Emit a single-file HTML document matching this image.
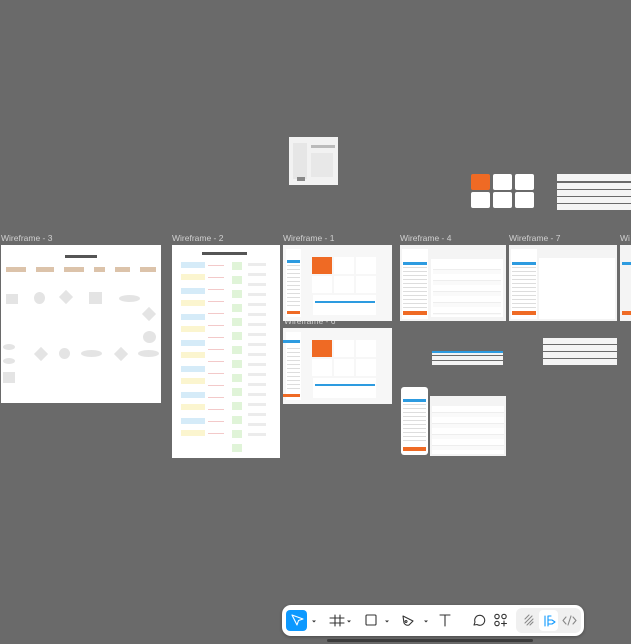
<!DOCTYPE html>
<html><head><meta charset="utf-8"><style>
*{margin:0;padding:0;box-sizing:border-box}
body{width:631px;height:644px;background:#6a6a6a;position:relative;overflow:hidden;font-family:"Liberation Sans",sans-serif}
.a{position:absolute}
.lbl{position:absolute;color:#d0d0d0;font-size:8.5px;white-space:nowrap}
.f{position:absolute;background:#fff;overflow:hidden}
.g{background:#e4e4e4}
.ln{position:absolute;height:1px;background:#ccc}
</style></head><body>

<!-- thumbnail -->
<div class="f" style="left:289px;top:137px;width:49px;height:48px;background:#f2f2f2">
 <div class="a" style="left:4px;top:6px;width:14px;height:36px;background:#e6e6e6"></div>
 <div class="a" style="left:22px;top:8px;width:24px;height:3px;background:#bbb"></div>
 <div class="a" style="left:22px;top:16px;width:22px;height:24px;background:#e8e8e8"></div>
 <div class="a" style="left:8px;top:40px;width:8px;height:4px;background:#888"></div>
</div>

<!-- orange tiles -->
<div class="a" style="left:471px;top:174px;width:19px;height:16px;background:#ef6a24;border-radius:2px"></div>
<div class="a" style="left:493px;top:174px;width:19px;height:16px;background:#fff;border-radius:2px"></div>
<div class="a" style="left:515px;top:174px;width:19px;height:16px;background:#fff;border-radius:2px"></div>
<div class="a" style="left:471px;top:192px;width:19px;height:16px;background:#fff;border-radius:2px"></div>
<div class="a" style="left:493px;top:192px;width:19px;height:16px;background:#fff;border-radius:2px"></div>
<div class="a" style="left:515px;top:192px;width:19px;height:16px;background:#fff;border-radius:2px"></div>
<!-- table rows top right -->
<div class="a" style="left:557px;top:174px;width:74px;height:7px;background:#f4f4f4"></div>
<div class="a" style="left:557px;top:183px;width:74px;height:6px;background:#f4f4f4"></div>
<div class="a" style="left:557px;top:190px;width:74px;height:6px;background:#f4f4f4"></div>
<div class="a" style="left:557px;top:197px;width:74px;height:6px;background:#f4f4f4"></div>
<div class="a" style="left:557px;top:204px;width:74px;height:6px;background:#f4f4f4"></div>

<!-- labels -->
<div class="lbl" style="left:1px;top:233px">Wireframe - 3</div>
<div class="lbl" style="left:172px;top:233px">Wireframe - 2</div>
<div class="lbl" style="left:283px;top:233px">Wireframe - 1</div>
<div class="lbl" style="left:400px;top:233px">Wireframe - 4</div>
<div class="lbl" style="left:509px;top:233px">Wireframe - 7</div>
<div class="lbl" style="left:620px;top:233px">Wi</div>
<div class="lbl" style="left:284px;top:316px">Wireframe - 6</div>

<!-- Wireframe 3 -->
<div class="f" style="left:1px;top:245px;width:160px;height:158px">
 <div class="a" style="left:64px;top:10px;width:32px;height:3px;background:#555"></div>
 <div class="a" style="left:5px;top:22px;width:20px;height:5px;background:#dcc3aa"></div>
 <div class="a" style="left:35px;top:22px;width:18px;height:5px;background:#dcc3aa"></div>
 <div class="a" style="left:63px;top:22px;width:20px;height:5px;background:#dcc3aa"></div>
 <div class="a" style="left:93px;top:22px;width:11px;height:5px;background:#dcc3aa"></div>
 <div class="a" style="left:114px;top:22px;width:15px;height:5px;background:#dcc3aa"></div>
 <div class="a" style="left:139px;top:22px;width:16px;height:5px;background:#dcc3aa"></div>
 <div class="a g" style="left:5px;top:49px;width:12px;height:10px"></div>
 <div class="a g" style="left:33px;top:47px;width:11px;height:12px;border-radius:50%"></div>
 <div class="a g" style="left:60px;top:47px;width:10px;height:10px;transform:rotate(45deg)"></div>
 <div class="a g" style="left:88px;top:47px;width:13px;height:12px"></div>
 <div class="a g" style="left:118px;top:50px;width:21px;height:7px;border-radius:50%"></div>
 <div class="a g" style="left:143px;top:64px;width:10px;height:10px;transform:rotate(45deg)"></div>
 <div class="a g" style="left:142px;top:86px;width:13px;height:12px;border-radius:50%"></div>
 <div class="a g" style="left:137px;top:105px;width:21px;height:7px;border-radius:50%"></div>
 <div class="a g" style="left:115px;top:104px;width:10px;height:10px;transform:rotate(45deg)"></div>
 <div class="a g" style="left:80px;top:105px;width:21px;height:7px;border-radius:50%"></div>
 <div class="a g" style="left:58px;top:103px;width:11px;height:11px;border-radius:50%"></div>
 <div class="a g" style="left:35px;top:104px;width:10px;height:10px;transform:rotate(45deg)"></div>
 <div class="a g" style="left:2px;top:99px;width:12px;height:6px;border-radius:50%"></div>
 <div class="a g" style="left:2px;top:113px;width:12px;height:6px;border-radius:50%"></div>
 <div class="a g" style="left:2px;top:127px;width:12px;height:11px"></div>
</div>

<!-- Wireframe 2 -->
<div class="f" style="left:172px;top:245px;width:108px;height:213px">
 <div class="a" style="left:30px;top:7px;width:45px;height:3px;background:#555"></div>
 <div class="a" style="left:9px;top:17px;width:24px;height:180px;background:repeating-linear-gradient(#d5ebf8 0 6px,#fff 6px 12px,#fbf5cf 12px 18px,#fff 18px 26px)"></div>
 <div class="a" style="left:60px;top:17px;width:10px;height:190px;background:repeating-linear-gradient(#e0f4d8 0 8px,#fff 8px 14px)"></div>
 <div class="a" style="left:76px;top:18px;width:18px;height:180px;background:repeating-linear-gradient(#ececec 0 3px,#fff 3px 10px)"></div>
 <div class="a" style="left:36px;top:20px;width:16px;height:180px;background:repeating-linear-gradient(#f3c9c9 0 1px,#fff 1px 12px)"></div>
</div>

<!-- dashboard frames -->
<div class="f" style="left:283px;top:245px;width:109px;height:76px;background:#f7f7f7">
 <div class="a" style="left:3px;top:4px;width:15px;height:68px;background:#fff"></div>
 <div class="a" style="left:4px;top:15px;width:13px;height:3px;background:#2d9be0"></div>
 <div class="a" style="left:4px;top:20px;width:13px;height:44px;background:repeating-linear-gradient(#ddd 0 1px,#fff 1px 4px)"></div>
 <div class="a" style="left:4px;top:66px;width:13px;height:3px;background:#ef6a24"></div>
 <div class="a" style="left:29px;top:12px;width:20px;height:17px;background:#ef6a24"></div>
 <div class="a" style="left:51px;top:12px;width:20px;height:17px;background:#fff"></div>
 <div class="a" style="left:73px;top:12px;width:20px;height:17px;background:#fff"></div>
 <div class="a" style="left:29px;top:31px;width:20px;height:17px;background:#fff"></div>
 <div class="a" style="left:51px;top:31px;width:20px;height:17px;background:#fff"></div>
 <div class="a" style="left:73px;top:31px;width:20px;height:17px;background:#fff"></div>
 <div class="a" style="left:30px;top:50px;width:63px;height:20px;background:#fff"></div>
 <div class="a" style="left:32px;top:56px;width:60px;height:2px;background:#2d9be0"></div>
</div>
<div class="f" style="left:283px;top:328px;width:109px;height:76px;background:#f7f7f7">
 <div class="a" style="left:3px;top:4px;width:15px;height:68px;background:#fff"></div>
 <div class="a" style="left:0px;top:12px;width:17px;height:3px;background:#2d9be0"></div>
 <div class="a" style="left:4px;top:20px;width:13px;height:44px;background:repeating-linear-gradient(#ddd 0 1px,#fff 1px 4px)"></div>
 <div class="a" style="left:0px;top:66px;width:17px;height:3px;background:#ef6a24"></div>
 <div class="a" style="left:29px;top:12px;width:20px;height:17px;background:#ef6a24"></div>
 <div class="a" style="left:51px;top:12px;width:20px;height:17px;background:#fff"></div>
 <div class="a" style="left:73px;top:12px;width:20px;height:17px;background:#fff"></div>
 <div class="a" style="left:29px;top:31px;width:20px;height:17px;background:#fff"></div>
 <div class="a" style="left:51px;top:31px;width:20px;height:17px;background:#fff"></div>
 <div class="a" style="left:73px;top:31px;width:20px;height:17px;background:#fff"></div>
 <div class="a" style="left:30px;top:50px;width:63px;height:20px;background:#fff"></div>
 <div class="a" style="left:32px;top:56px;width:60px;height:2px;background:#2d9be0"></div>
</div>

<!-- Wireframe 4 -->
<div class="f" style="left:400px;top:245px;width:106px;height:76px;background:#f4f4f4">
 <div class="a" style="left:2px;top:4px;width:26px;height:70px;background:#fff"></div>
 <div class="a" style="left:3px;top:17px;width:24px;height:3px;background:#2d9be0"></div>
 <div class="a" style="left:3px;top:22px;width:24px;height:42px;background:repeating-linear-gradient(#ddd 0 1px,#fff 1px 4px)"></div>
 <div class="a" style="left:3px;top:66px;width:24px;height:4px;background:#ef6a24"></div>
 <div class="a" style="left:31px;top:14px;width:72px;height:58px;background:#fff"></div>
 <div class="a" style="left:33px;top:18px;width:68px;height:52px;background:repeating-linear-gradient(#fff 0 6px,#eee 6px 7px,#fafafa 7px 11px)"></div>
</div>
<!-- Wireframe 7 -->
<div class="f" style="left:509px;top:245px;width:108px;height:76px;background:#f4f4f4">
 <div class="a" style="left:2px;top:4px;width:26px;height:70px;background:#fff"></div>
 <div class="a" style="left:3px;top:17px;width:24px;height:3px;background:#2d9be0"></div>
 <div class="a" style="left:3px;top:22px;width:24px;height:42px;background:repeating-linear-gradient(#ddd 0 1px,#fff 1px 4px)"></div>
 <div class="a" style="left:3px;top:66px;width:24px;height:4px;background:#ef6a24"></div>
 <div class="a" style="left:30px;top:13px;width:76px;height:61px;background:#fff"></div>
</div>
<div class="f" style="left:620px;top:245px;width:11px;height:76px;background:#f4f4f4">
 <div class="a" style="left:2px;top:17px;width:9px;height:3px;background:#2d9be0"></div>
 <div class="a" style="left:2px;top:66px;width:9px;height:4px;background:#ef6a24"></div>
</div>

<!-- small tables -->
<div class="a" style="left:432px;top:351px;width:71px;height:15px;background:repeating-linear-gradient(#f4f4f4 0 4px,#6a6a6a 4px 5px)"></div>
<div class="a" style="left:432px;top:351px;width:71px;height:2px;background:#2d9be0"></div>
<div class="a" style="left:543px;top:338px;width:74px;height:28px;background:repeating-linear-gradient(#f4f4f4 0 6px,#6a6a6a 6px 7px)"></div>

<!-- mobile + table -->
<div class="f" style="left:401px;top:387px;width:27px;height:68px;border-radius:3px;background:#fff">
 <div class="a" style="left:2px;top:12px;width:23px;height:3px;background:#2d9be0"></div>
 <div class="a" style="left:2px;top:17px;width:23px;height:40px;background:repeating-linear-gradient(#ddd 0 1px,#fff 1px 4px)"></div>
 <div class="a" style="left:2px;top:60px;width:23px;height:4px;background:#ef6a24"></div>
</div>
<div class="f" style="left:430px;top:396px;width:76px;height:60px;background:#f4f4f4">
 <div class="a" style="left:2px;top:10px;width:72px;height:48px;background:repeating-linear-gradient(#fff 0 6px,#eee 6px 7px,#fafafa 7px 11px)"></div>
</div>

<!-- toolbar -->
<div class="a" style="left:282px;top:605px;width:302px;height:31px;background:#fff;border-radius:9px;box-shadow:0 1px 3px rgba(0,0,0,.3)"></div>
<div class="a" style="left:286px;top:610px;width:21px;height:21px;background:#0d99ff;border-radius:4px"></div>
<svg class="a" style="left:282px;top:605px" width="302" height="31" viewBox="0 0 302 31" fill="none" stroke="#333" stroke-width="1.1" stroke-linecap="round" stroke-linejoin="round">
 <path d="M10 10 L21 14 L16.5 15.5 L15 20 Z" stroke="#fff"/>
 <path d="M30 15.5l2 2 2-2z M65 15.5l2 2 2-2z M103 15.5l2 2 2-2z M142 15.5l2 2 2-2z" fill="#333" stroke="none"/>
 <path d="M53 10v11 M58 10v11 M48 13h14 M48 18h14"/>
 <rect x="84" y="10" width="10" height="10" rx="1"/>
 <path d="M121 11 L131 16 L127 20 Q124 21 122 18 Z M124 15.5 a1 1 0 1 0 .1 0"/>
 <path d="M158 10h10 M163 10v11"/>
 <path d="M192 20 l1-3 a5 5 0 1 1 2 2.5 z"/>
 <circle cx="215" cy="11.5" r="2.2"/><circle cx="222" cy="11.5" r="2.2"/><circle cx="215" cy="18.5" r="2.2"/><path d="M222 16v5 M219.5 18.5h5"/>
</svg>
<div class="a" style="left:516px;top:608px;width:65px;height:25px;background:#f0f0f0;border-radius:6px"></div>
<div class="a" style="left:539px;top:610px;width:19px;height:21px;background:#fff;border-radius:4px"></div>
<svg class="a" style="left:516px;top:608px" width="65" height="25" viewBox="0 0 65 25" fill="none" stroke-width="1.1" stroke-linecap="round" stroke-linejoin="round">
 <path d="M9 11l4-4 M9 15l7-7 M11 17l6-6 M14 17l3-3" stroke="#888"/>
 <path d="M29 8v10 M32 8v10 M32 8h3 M32 12h4 l3 2-3 2h-4" stroke="#0d99ff"/>
 <path d="M50 9l-3 3.5 3 3.5 M57 9l3 3.5-3 3.5 M55 8l-3 9" stroke="#888"/>
</svg>
<div class="a" style="left:327px;top:639px;width:206px;height:3px;background:#3c3c3c;border-radius:2px"></div>
</body></html>
